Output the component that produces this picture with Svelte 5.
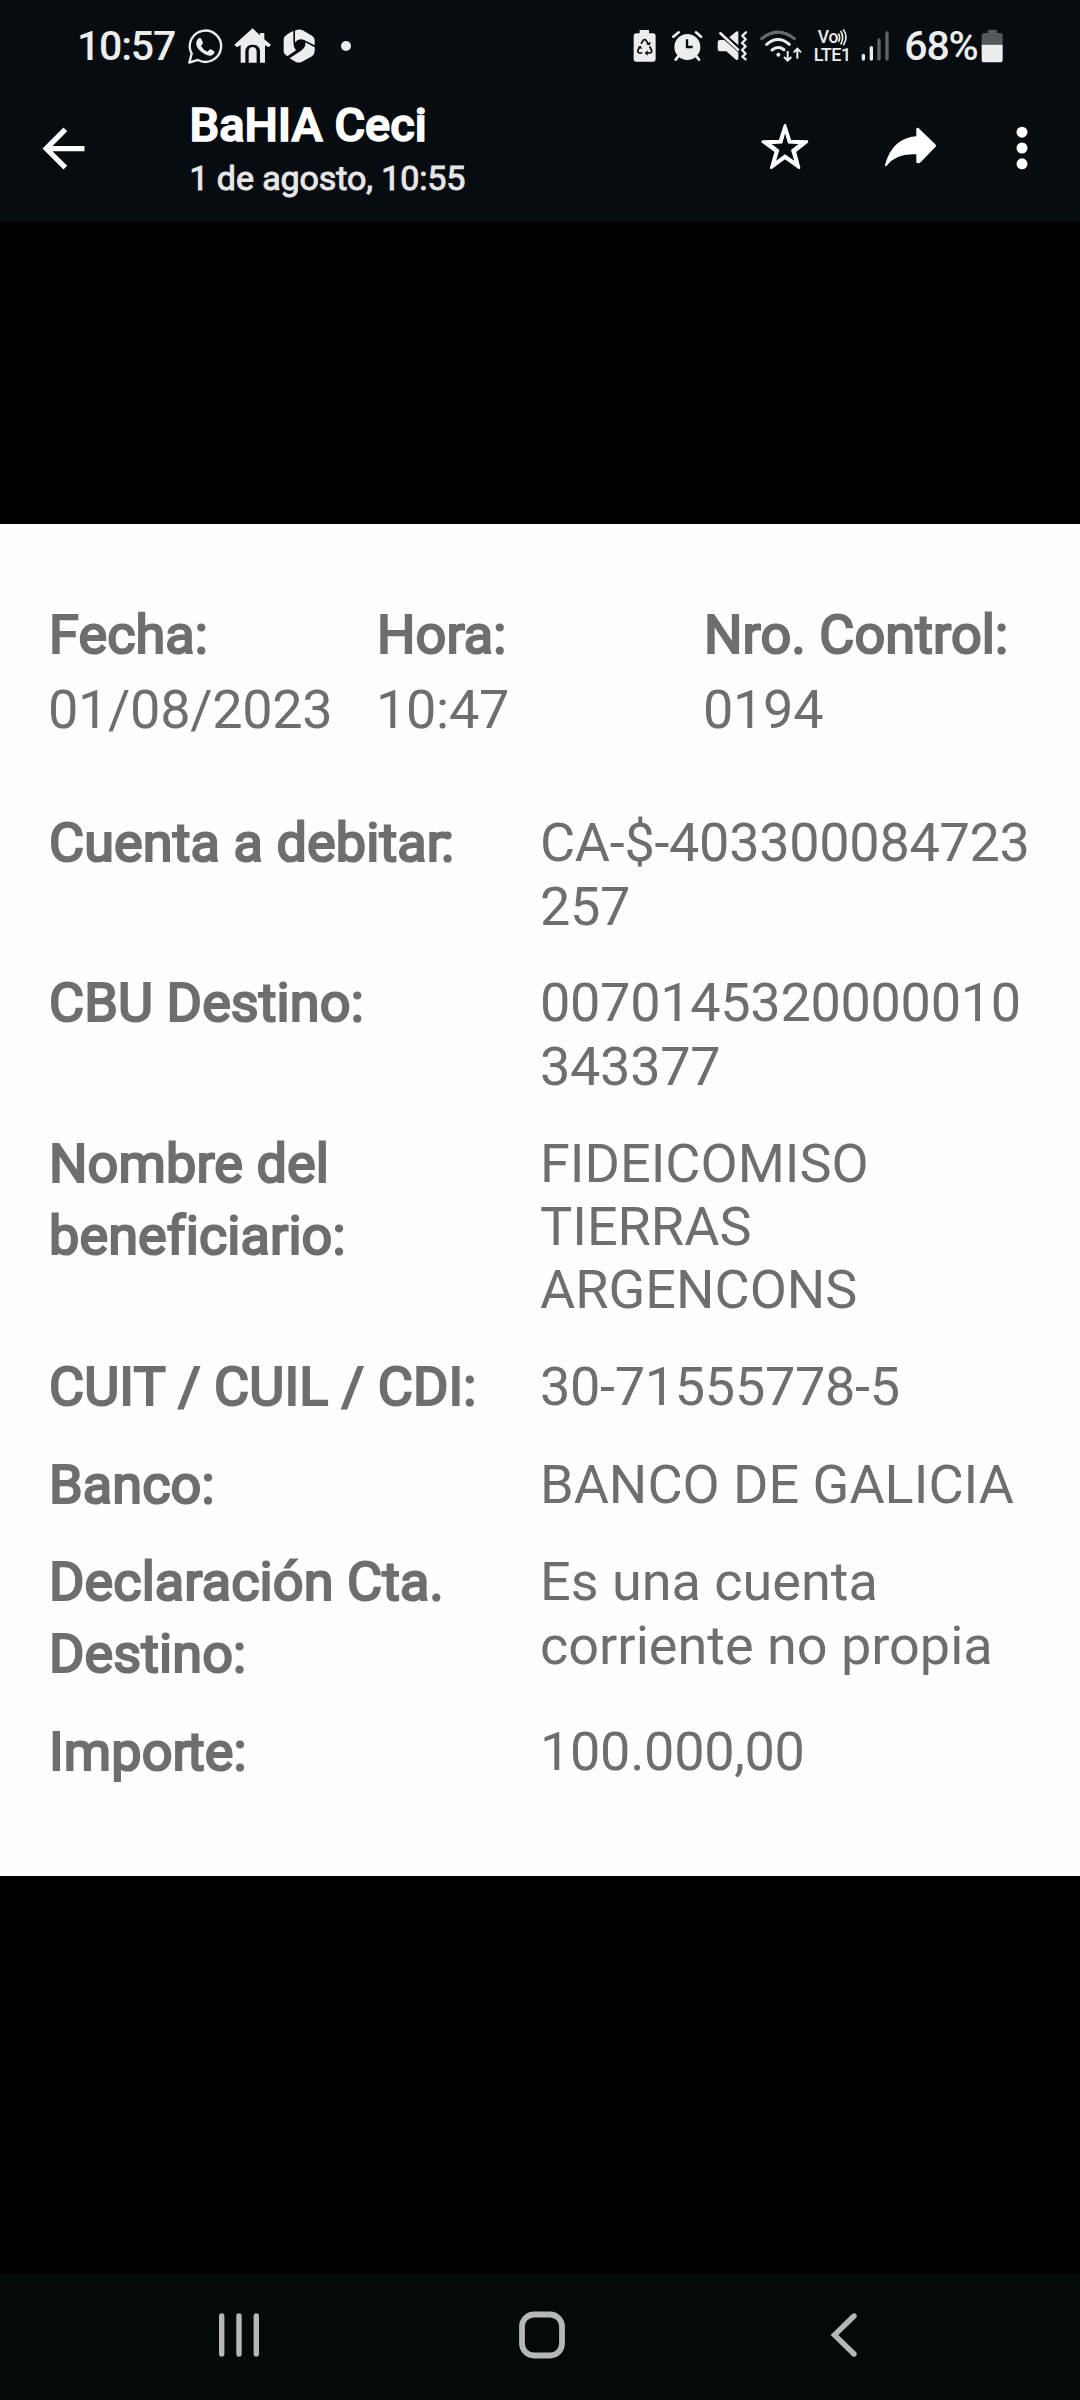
<script>
  const summary = [
    { label: 'Fecha:', value: '01/08/2023' },
    { label: 'Hora:', value: '10:47' },
    { label: 'Nro. Control:', value: '0194' }
  ];

  // snug: the last "r" of the label is kerned into the next character
  const details = [
    { label: 'Cuenta a debitar:', value: 'CA-$-403300084723257', numeric: true, snug: true },
    { label: 'CBU Destino:', value: '0070145320000010343377', numeric: true },
    { label: 'Nombre del beneficiario:', value: 'FIDEICOMISO TIERRAS ARGENCONS' },
    { label: 'CUIT / CUIL / CDI:', value: '30-71555778-5', numeric: true },
    { label: 'Banco:', value: 'BANCO DE GALICIA' },
    { label: 'Declaración Cta. Destino:', value: 'Es una cuenta corriente no propia' },
    { label: 'Importe:', value: '100.000,00', numeric: true, snug: true }
  ];

  function beforeR(text) {
    return text.slice(0, text.lastIndexOf('r'));
  }

  function afterR(text) {
    return text.slice(text.lastIndexOf('r') + 1);
  }
</script>

<div class="screen">
  <div class="status-bar">
    <span class="clock">10:57</span>
    <svg class="whatsapp" viewBox="384 55 106 108" width="35.3" height="36">
      <path d="M388 159 L395 132 A47 47 0 1 1 414 151 Z" fill="none" stroke="#eceeee" stroke-width="7" stroke-linejoin="round" />
      <path d="M413 89 q5 -6 10 -3 l6 13 q1 3 -6 10 q8 13 20 17 q6 -8 9 -7 l11 6 q3 4 -4 10 q-9 7 -24 -1 q-20 -10 -26 -27 q-2 -11 4 -18 Z" fill="#eceeee" />
    </svg>
    <svg class="house" viewBox="521 55 112 108" width="37.3" height="36">
      <path d="M577 56 L599 77 V70 H612 V89 L632 105 L625 113 L614 106 V159 H599 V122 Q596 105 577 105 Q558 105 555 122 V159 H541 V106 L530 113 L522 105 Z" fill="#eceeee" />
      <path d="M565 159 V124 Q566 112 577 112 Q588 112 589 124 V159 Z" fill="#eceeee" />
    </svg>
    <svg class="hexagon" viewBox="670 55 98 108" width="32.7" height="36">
      <path d="M701 64 Q692 67 676 80 Q672 83 672 90 V127 Q673 134 683 140 L709 122 Q701 113 701 98 Z" fill="#eceeee" />
      <path d="M706 63 Q718 57 729 62 L757 78 Q765 83 765 91 V107 L735 92 Q718 84 706 98 Z" fill="#eceeee" />
      <path d="M765 113 V124 Q765 134 757 140 L727 156 Q717 161 707 156 L690 146 L723 124 Q739 114 737 98 Z" fill="#eceeee" />
    </svg>
    <span class="dot"></span>

    <svg class="recycle" viewBox="64 60 70 102" width="23.3" height="34">
      <path d="M84 63 h28 v10 h12 q8 0 8 8 v69 q0 8 -8 8 h-50 q-8 0 -8 -8 v-69 q0 -8 8 -8 h10 Z" fill="#eceeee" />
      <path d="M88 104 L95 94 Q99 89 103 94 L110 105 M114 112 L120 124 Q121 131 114 132 H104 M92 132 H84 Q76 130 79 123 L85 113" fill="none" stroke="#060c10" stroke-width="5" />
      <path d="M103 106 L115 109 L117 98 Z M108 124 V140 L99 132 Z M78 114 L88 110 L91 121 Z" fill="#060c10" />
    </svg>
    <svg class="alarm" viewBox="181 62 92 94" width="30.7" height="31.3">
      <circle cx="227" cy="113" r="39" fill="#eceeee" />
      <path d="M185 82 L201 69 M253 69 L268 82" fill="none" stroke="#eceeee" stroke-width="8" stroke-linecap="round" />
      <path d="M199 142 L192 151 M255 142 L262 151" fill="none" stroke="#eceeee" stroke-width="8" stroke-linecap="round" />
      <path d="M226 90 V113 H243" fill="none" stroke="#060c10" stroke-width="7" />
    </svg>
    <svg class="muted" viewBox="316 62 92 94" width="30.7" height="31.3">
      <path d="M325 92 H338 L380 129 V148 Q378 154 373 151 L344 126 H325 Q318 126 318 119 V99 Q318 92 325 92 Z" fill="#eceeee" />
      <path d="M373 67 Q380 64 380 70 V108 L353 84 Z" fill="#eceeee" />
      <path d="M326 72 L379 121" fill="none" stroke="#eceeee" stroke-width="8" stroke-linecap="round" />
      <path d="M403 69 L392 79 L402 90 L391 101 L402 111 L391 122 L402 133 L392 142 L402 150" fill="none" stroke="#eceeee" stroke-width="7" stroke-linejoin="round" stroke-linecap="round" />
    </svg>
    <svg class="wifi" viewBox="446 58 128 102" width="42.7" height="34">
      <path d="M451 87 Q500 48 549 87" fill="none" stroke="#666b6e" stroke-width="9" stroke-linecap="round" />
      <path d="M466 104 Q500 75 534 104" fill="none" stroke="#eceeee" stroke-width="9" stroke-linecap="round" />
      <path d="M482 121 Q500 107 518 120" fill="none" stroke="#eceeee" stroke-width="9" stroke-linecap="round" />
      <circle cx="501" cy="135" r="6" fill="#eceeee" />
      <path d="M529 124 V152 M518 142 L529 153 L540 142 M558 147 V118 M547 128 L558 117 L569 128" fill="none" stroke="#eceeee" stroke-width="6" />
    </svg>
    <span class="volte">
      <span class="vo">Vo<svg viewBox="686 60 28 56" width="9.3" height="18.7"><path d="M687 76 q8 12 0 26 M694 69 q12 19 0 40 M702 64 q16 24 0 48" fill="none" stroke="#eceeee" stroke-width="5" /></svg></span>
      <span class="lte">LTE1</span>
    </span>
    <svg class="signal" viewBox="752 62 86 94" width="28.7" height="31.3">
      <path d="M759 138 V149 M783 115 V149" fill="none" stroke="#eceeee" stroke-width="10" stroke-linecap="round" />
      <path d="M806 92 V149 M830 71 V149" fill="none" stroke="#5f6467" stroke-width="10" stroke-linecap="round" />
    </svg>
    <span class="percent">68%</span>
    <svg class="battery" viewBox="1114 58 68 104" width="22.7" height="34.7">
      <path d="M1134 64 q0 -4 4 -4 h20 q4 0 4 4 v6 h9 q8 0 8 8 v27 h-63 v-27 q0 -8 8 -8 h10 Z" fill="#55595b" />
      <path d="M1116 105 h63 v45 q0 8 -8 8 h-47 q-8 0 -8 -8 Z" fill="#eceeee" />
    </svg>
  </div>

  <header class="top-bar">
    <svg class="back" viewBox="0 0 24 24" width="63" height="63">
      <path d="M20 11H7.83l5.59-5.59L12 4l-8 8 8 8 1.41-1.41L7.83 13H20v-2z" fill="#fff" />
    </svg>
    <div class="heading">
      <span class="title">BaHIA Ceci</span>
      <span class="subtitle">1 de agosto, 10:55</span>
    </div>
    <svg class="star" viewBox="122 99 144 140" width="48" height="46.7">
      <path d="M194 106 L209 153 L260 155 L223 184 L236 233 L194 203 L153 233 L167 184 L127 155 L179 153 Z" fill="none" stroke="#fff" stroke-width="8" stroke-linejoin="round" />
      <path d="M194 118 L206 157 L244 159 L216 181 L228 221 L194 197 L161 221 L173 181 L144 159 L183 157 Z" fill="none" stroke="#fff" stroke-width="7" />
    </svg>
    <svg class="forward" viewBox="492 109 160 121" width="53.3" height="40.3">
      <path d="M589 114 Q592 109 598 114 L646 161 Q650 165 646 169 L602 215 Q594 221 589 215 V191 Q529 187 500 225 Q495 230 495 223 Q517 142 589 137 Z" fill="#fff" />
    </svg>
    <svg class="more" viewBox="0 0 12 44" width="12" height="44">
      <circle cx="6" cy="6.2" r="5.5" fill="#fff" />
      <circle cx="6" cy="22" r="5.5" fill="#fff" />
      <circle cx="6" cy="37.8" r="5.5" fill="#fff" />
    </svg>
  </header>

  <main class="viewer">
    <section class="receipt">
      <div class="summary">
        {#each summary as item}
          <div>
            <div class="label">{item.label}</div>
            <div class="value numeric">{item.value}</div>
          </div>
        {/each}
      </div>

      <div class="details">
        {#each details as item}
          <div class="row">
            {#if item.snug}
              <div class="label">{beforeR(item.label)}<span class="snug">r</span>{afterR(item.label)}</div>
            {:else}
              <div class="label">{item.label}</div>
            {/if}
            <div class="value" class:numeric={item.numeric}>{item.value}</div>
          </div>
        {/each}
      </div>
    </section>
  </main>

  <nav class="nav-bar">
    <svg viewBox="0 0 48 52" width="48" height="52">
      <path d="M6.7 7 V45 M24 7 V45 M41.3 7 V45" fill="none" stroke="#b5b7b9" stroke-width="5.4" stroke-linecap="round" />
    </svg>
    <svg viewBox="0 0 48 52" width="48" height="52">
      <rect x="4" y="5.5" width="40" height="41" rx="12" fill="none" stroke="#b5b7b9" stroke-width="5.8" />
    </svg>
    <svg viewBox="0 0 48 52" width="48" height="52">
      <path d="M34 7 L14.5 26 L34 45" fill="none" stroke="#b5b7b9" stroke-width="5.4" stroke-linecap="round" />
    </svg>
  </nav>
</div>

<style>
  :global(body) {
    background: #000;
  }

  .screen {
    display: flex;
    flex-direction: column;
    width: 1080px;
    height: 2400px;
    background: #000;
    font-family: Roboto, 'Liberation Sans', sans-serif;
    overflow: hidden;
  }

  svg {
    display: block;
    flex: none;
  }

  .status-bar {
    display: flex;
    align-items: center;
    box-sizing: border-box;
    height: 92px;
    padding-left: 77px;
    background: #060c10;
    color: #eceeee;
    white-space: nowrap;
  }

  .clock,
  .percent {
    font-size: 41px;
    font-weight: 500;
    line-height: 48px;
    letter-spacing: -1.2px;
  }

  .clock { width: 111px; }
  .house { margin-left: 10.3px; }
  .hexagon { margin-left: 12.4px; }

  .dot {
    width: 10px;
    height: 10px;
    margin-left: 24.7px;
    border-radius: 50%;
    background: #eceeee;
  }

  .recycle { margin-left: auto; }
  .alarm { margin-left: 15.7px; }
  .muted { margin-left: 14.3px; }
  .wifi { margin-left: 12.6px; }

  .volte {
    display: flex;
    flex-direction: column;
    width: 39px;
    margin-left: 10.7px;
    margin-right: 1px;
    font-weight: 500;
  }

  .vo {
    display: flex;
    align-items: center;
    height: 17.5px;
    padding-left: 4px;
    font-size: 17.5px;
    line-height: 17.5px;
  }

  .lte {
    font-size: 18px;
    line-height: 17.5px;
    letter-spacing: -0.4px;
  }

  .signal { margin-left: 7px; }

  .percent {
    width: 77px;
    margin-left: 15px;
  }

  .battery { margin-right: 76px; }

  .top-bar {
    display: flex;
    align-items: center;
    box-sizing: border-box;
    height: 130px;
    padding: 0 51.7px 17.8px 31.5px;
    background: #060c10;
  }

  .heading {
    display: flex;
    flex-direction: column;
    gap: 4px;
    box-sizing: border-box;
    width: 569.5px;
    margin-left: 94px;
    padding-left: 1px;
    white-space: nowrap;
  }

  .title {
    font-size: 47px;
    font-weight: 500;
    line-height: 56px;
    color: #fff;
    -webkit-text-stroke: 1.6px #fff;
  }

  .subtitle {
    font-size: 34px;
    line-height: 42px;
    letter-spacing: -0.1px;
    color: #e6e6e7;
    -webkit-text-stroke: 1px #e6e6e7;
  }

  .star {
    margin-left: 2.6px;
    margin-bottom: 3px;
  }

  .forward {
    margin-left: 75.4px;
    margin-bottom: 2px;
  }

  .more { margin-left: auto; }

  .viewer {
    flex: 1;
    padding-top: 302px;
  }

  .receipt {
    box-sizing: border-box;
    height: 1352px;
    padding: 75px 40px 0 48px;
    background: #fefefe;
    color: #6d6e70;
    font-size: 54px;
  }

  .label {
    padding-left: 1px;
    line-height: 72px;
    letter-spacing: 0.1px;
    -webkit-text-stroke: 2.2px #6d6e70;
  }

  .snug { letter-spacing: -4px; }

  .value { line-height: 63.2px; }

  .numeric { letter-spacing: -0.3px; }

  .summary {
    display: grid;
    grid-template-columns: 328px 327px 1fr;
    white-space: nowrap;
  }

  .summary .value { margin-top: 6.8px; }

  .details {
    display: flex;
    flex-direction: column;
    gap: 25.8px;
    margin-top: 66.4px;
  }

  .row {
    display: grid;
    grid-template-columns: 492px 1fr;
    align-items: first baseline;
  }

  .row .value {
    padding-bottom: 3.9px;
    overflow-wrap: anywhere;
  }

  .nav-bar {
    display: flex;
    align-items: center;
    justify-content: space-between;
    box-sizing: border-box;
    height: 126px;
    padding: 0 212px 4px 215px;
    background: #04090c;
  }
</style>
